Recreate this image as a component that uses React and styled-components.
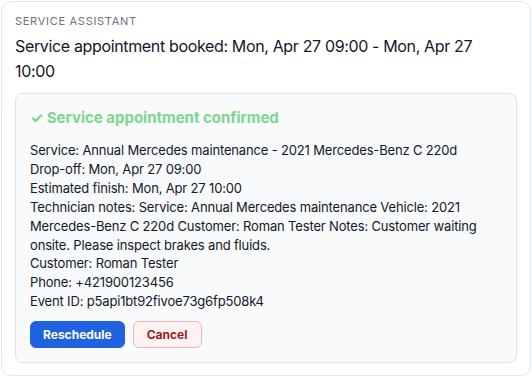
import React from "react";
import styled, { createGlobalStyle } from "styled-components";

const Global = createGlobalStyle`
  html, body { margin: 0; padding: 0; background: #ffffff; }
  body { font-family: Inter, "Noto Sans", sans-serif; color: #111827; }
  * { box-sizing: border-box; }
`;

const Page = styled.div`
  padding: 1px;
`;

const Card = styled.section`
  width: 530px;
  border: 1px solid #e2e8f0;
  border-radius: 10px;
  background: #ffffff;
  padding: 12px 13px 12px 13px;
`;

const Label = styled.div`
  font-size: 11px;
  line-height: 15px;
  letter-spacing: 0.065em;
  text-transform: uppercase;
  color: #6b7280;
`;

const Title = styled.h1`
  margin: 5px 0 9px;
  max-width: 485px;
  font-size: 16px;
  font-weight: 400;
  line-height: 25px;
  letter-spacing: -0.35px;
  color: #111827;
`;

const Panel = styled.div`
  border: 1px solid #dbe3ec;
  border-radius: 8px;
  background: #f8fafc;
  padding: 13px 14px 14px;
`;

const Confirmed = styled.div`
  font-size: 15px;
  font-weight: 700;
  line-height: 22px;
  color: #7dd68c;
  margin-bottom: 12px;
`;

const Details = styled.div`
  font-size: 13px;
  line-height: 18.9px;
  letter-spacing: -0.16px;
  color: #111827;
`;

const Line = styled.div``;

const Actions = styled.div`
  display: flex;
  gap: 8px;
  margin-top: 10px;
`;

const Button = styled.button`
  font-family: inherit;
  font-size: 12px;
  font-weight: 700;
  height: 27px;
  padding: 0 ${(p) => (p.$danger ? "13px" : "12px")};
  border-radius: 6px;
  cursor: pointer;
  border: 1px solid ${(p) => (p.$danger ? "#f3b4b4" : "#1f63e0")};
  background: ${(p) => (p.$danger ? "#fef2f2" : "#1f63e0")};
  color: ${(p) => (p.$danger ? "#991b1b" : "#ffffff")};
`;

const lines = [
  "Service: Annual Mercedes maintenance - 2021 Mercedes-Benz C 220d",
  "Drop-off: Mon, Apr 27 09:00",
  "Estimated finish: Mon, Apr 27 10:00",
  "Technician notes: Service: Annual Mercedes maintenance Vehicle: 2021 Mercedes-Benz C 220d Customer: Roman Tester Notes: Customer waiting onsite. Please inspect brakes and fluids.",
  "Customer: Roman Tester",
  "Phone: +421900123456",
  "Event ID: p5api1bt92fivoe73g6fp508k4",
];

export default function App() {
  return (
    <Page>
      <Global />
      <Card>
        <Label>Service Assistant</Label>
        <Title>Service appointment booked: Mon, Apr 27 09:00 - Mon, Apr 27 10:00</Title>
        <Panel>
          <Confirmed>✓ Service appointment confirmed</Confirmed>
          <Details>
            {lines.map((l) => (
              <Line key={l}>{l}</Line>
            ))}
          </Details>
          <Actions>
            <Button>Reschedule</Button>
            <Button $danger>Cancel</Button>
          </Actions>
        </Panel>
      </Card>
    </Page>
  );
}
